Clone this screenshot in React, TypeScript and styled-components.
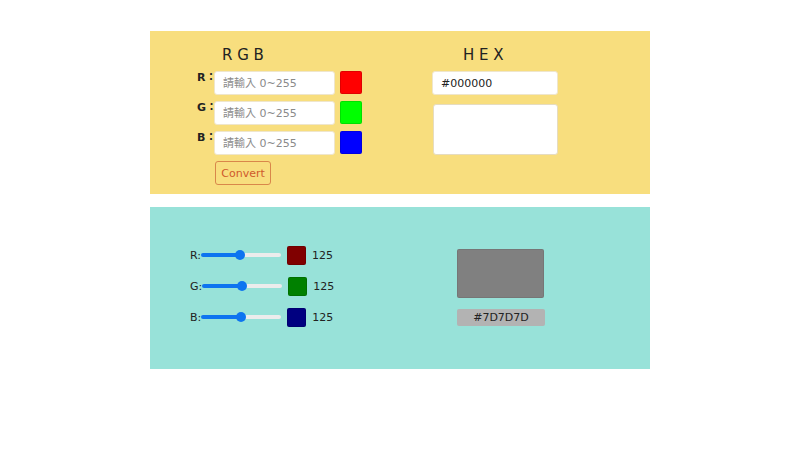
import React, { useState } from "react";
import styled, { createGlobalStyle } from "styled-components";

const GlobalStyle = createGlobalStyle`
  html, body {
    margin: 0;
    padding: 0;
    background: #ffffff;
    font-family: "DejaVu Sans", "Noto Sans CJK TC", sans-serif;
    color: #222;
  }
`;

interface Channel {
	key: "r" | "g" | "b";
	label: string;
	swatch: string;
	dark: string;
}

const channels: Channel[] = [
	{ key: "r", label: "R", swatch: "#ff0000", dark: "#800000" },
	{ key: "g", label: "G", swatch: "#00ff00", dark: "#008000" },
	{ key: "b", label: "B", swatch: "#0000ff", dark: "#000080" },
];

const App: React.FC = () => {
	const [levels, setLevels] = useState({ r: 125, g: 125, b: 125 });

	const toHex = (n: number) => n.toString(16).padStart(2, "0").toUpperCase();
	const hex = `#${toHex(levels.r)}${toHex(levels.g)}${toHex(levels.b)}`;

	return (
		<>
			<GlobalStyle />
			<Page>
				<Converter>
					<RgbColumn>
						<Heading $offset={25}>R G B</Heading>
						{channels.map((c) => (
							<InputRow key={c.key}>
								<RowLabel>{c.label}：</RowLabel>
								<TextInput placeholder="請輸入 0~255" />
								<Swatch $color={c.swatch} />
							</InputRow>
						))}
						<ConvertButton>Convert</ConvertButton>
					</RgbColumn>
					<HexColumn>
						<Heading $offset={31}>H E X</Heading>
						<HexInput defaultValue="#000000" />
						<HexResult />
					</HexColumn>
				</Converter>

				<Mixer>
					<SliderGroup>
						{channels.map((c) => (
							<SliderRow key={c.key}>
								<SliderLabel>{c.label}:</SliderLabel>
								<Range
									type="range"
									min={0}
									max={255}
									value={levels[c.key]}
									style={{ backgroundSize: `${(levels[c.key] / 255) * 100}% 100%` }}
									onChange={(e) =>
										setLevels({ ...levels, [c.key]: parseInt(e.target.value) })
									}
								/>
								<SmallSwatch $color={c.dark} />
								<Value>{levels[c.key]}</Value>
							</SliderRow>
						))}
					</SliderGroup>
					<Preview>
						<PreviewBox style={{ background: `rgb(${levels.r + 3}, ${levels.g + 3}, ${levels.b + 3})` }} />
						<HexTag>{hex}</HexTag>
					</Preview>
				</Mixer>
			</Page>
		</>
	);
};

const Page = styled.main`
  width: 500px;
  margin: 31px auto 0;
  display: flex;
  flex-direction: column;
  row-gap: 13px;
`;

const Converter = styled.section`
  background: #f8de7e;
  height: 163px;
  box-sizing: border-box;
  padding: 14px 0 0 47px;
  display: flex;
  column-gap: 70px;
`;

const RgbColumn = styled.div`
  display: flex;
  flex-direction: column;
  row-gap: 6px;
`;

const HexColumn = styled.div`
  display: flex;
  flex-direction: column;
  row-gap: 6px;
`;

const Heading = styled.h2<{ $offset: number }>`
  margin: 0 0 0 ${({ $offset }) => $offset}px;
  height: 20px;
  line-height: 20px;
  font-size: 15px;
  font-weight: normal;
  color: #222;
`;

const InputRow = styled.div`
  display: flex;
  align-items: flex-start;
`;

const RowLabel = styled.label`
  width: 17px;
  white-space: nowrap;
  font-size: 11px;
  font-weight: bold;
  line-height: 14px;
  font-family: "DejaVu Sans", "Noto Sans CJK TC", sans-serif;
`;

const TextInput = styled.input`
  width: 121px;
  height: 24px;
  box-sizing: border-box;
  border: 1px solid #efe6cc;
  border-radius: 3px;
  background: #fff;
  padding: 0 8px;
  font-size: 11px;
  font-family: "DejaVu Sans", "Noto Sans CJK TC", sans-serif;
  outline: none;
  &::placeholder {
    color: #8a8a8a;
  }
`;

const Swatch = styled.div<{ $color: string }>`
  width: 22px;
  height: 23px;
  margin-left: 5px;
  border-radius: 2px;
  box-sizing: border-box;
  border: 1px solid rgba(0, 0, 0, 0.12);
  background: ${({ $color }) => $color};
`;

const ConvertButton = styled.button`
  align-self: flex-start;
  margin-left: 18px;
  width: 56px;
  height: 24px;
  padding: 0;
  border: 1px solid #d9874a;
  border-radius: 3px;
  background: transparent;
  color: #cf5a2c;
  font-size: 11px;
  font-family: "DejaVu Sans", sans-serif;
`;

const HexInput = styled.input`
  width: 126px;
  height: 24px;
  box-sizing: border-box;
  border: 1px solid #efe6cc;
  border-radius: 3px;
  background: #fff;
  padding: 0 8px;
  font-size: 11px;
  color: #222;
  font-family: "DejaVu Sans", sans-serif;
  outline: none;
`;

const HexResult = styled.textarea`
  width: 125px;
  height: 51px;
  margin: 3px 0 0 1px;
  box-sizing: border-box;
  border: 1px solid #e6dcc0;
  border-radius: 3px;
  background: #fff;
  resize: none;
  outline: none;
`;

const Mixer = styled.section`
  background: #98e2d9;
  height: 162px;
  box-sizing: border-box;
  padding: 0 0 0 40px;
  display: flex;
  align-items: center;
`;

const SliderGroup = styled.div`
  width: 267px;
  display: flex;
  flex-direction: column;
  row-gap: 12px;
  margin-top: -4px;
`;

const SliderRow = styled.div`
  display: flex;
  align-items: center;
  height: 19px;
  font-size: 11px;
  color: #222;
`;

const SliderLabel = styled.span`
  font-size: 11px;
`;

const Range = styled.input`
  appearance: none;
  -webkit-appearance: none;
  width: 80px;
  height: 4px;
  margin: 0 0 1px;
  border-radius: 3px;
  background-color: #ececec;
  background-image: linear-gradient(#0d74f0, #0d74f0);
  background-repeat: no-repeat;
  outline: none;
  &::-webkit-slider-thumb {
    -webkit-appearance: none;
    width: 10px;
    height: 10px;
    border-radius: 50%;
    background: #0d74f0;
    border: none;
  }
`;

const SmallSwatch = styled.div<{ $color: string }>`
  width: 19px;
  height: 19px;
  margin-left: 6px;
  box-sizing: border-box;
  border-radius: 2px;
  border: 1px solid rgba(0, 0, 0, 0.12);
  background: ${({ $color }) => $color};
`;

const Value = styled.span`
  margin-left: 6px;
  font-size: 11px;
`;

const Preview = styled.div`
  display: flex;
  flex-direction: column;
  row-gap: 11px;
  margin-top: -1px;
`;

const PreviewBox = styled.div`
  width: 87px;
  height: 49px;
  border-radius: 2px;
  box-sizing: border-box;
  border: 1px solid rgba(0, 0, 0, 0.08);
`;

const HexTag = styled.div`
  width: 88px;
  height: 17px;
  line-height: 17px;
  border-radius: 2px;
  background: #b3b3b3;
  text-align: center;
  font-size: 11px;
  color: #222;
`;

export default App;
